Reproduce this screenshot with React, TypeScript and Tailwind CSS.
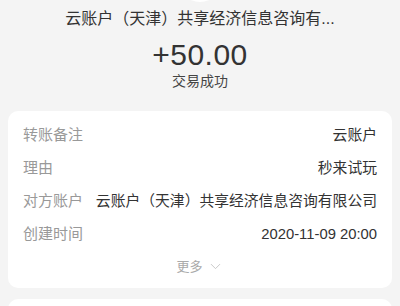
import { ChevronDown } from 'lucide-react'

const rows = [
  { label: '转账备注', value: '云账户' },
  { label: '理由', value: '秒来试玩' },
  { label: '对方账户', value: '云账户（天津）共享经济信息咨询有限公司' },
  { label: '创建时间', value: '2020-11-09 20:00' },
]

export default function App() {
  return (
    <div
      className="w-[400px] h-[306px] overflow-hidden bg-[#f4f4f4] text-[#333]"
      style={{ fontFamily: '"Liberation Sans", "Noto Sans CJK SC", sans-serif' }}
    >
      <div className="flex justify-center">
        <div className="w-[44px] h-[44px] -mt-[42px] rounded-full bg-white" />
      </div>

      {/* header */}
      <div className="flex flex-col items-center">
        <div className="mt-[6px] text-[16px] leading-[22px] text-[#333]">云账户（天津）共享经济信息咨询有...</div>
        <div className="mt-[7px] text-[30px] leading-[36px] tracking-[0.5px] text-[#333]">+50.00</div>
        <div className="-mt-[2px] text-[14px] leading-[20px] text-[#444]">交易成功</div>
      </div>

      {/* detail card */}
      <div className="mx-[8px] mt-[20px] rounded-[10px] bg-white px-[15px] pt-[8px] pb-[6px]">
        {rows.map((row) => (
          <div key={row.label} className="flex items-center justify-between h-[33px] text-[15px]">
            <span className="text-[#999] shrink-0">{row.label}</span>
            <span className="text-[#333] whitespace-nowrap text-[14.8px]">{row.value}</span>
          </div>
        ))}
        <div className="flex items-center justify-center gap-[4px] h-[31px] text-[13px] text-[#aaa]">
          <span>更多</span>
          <ChevronDown className="w-[17px] h-[17px] text-[#c4c4c4]" strokeWidth={1.3} />
        </div>
      </div>

      <div className="mx-[8px] mt-[11px] h-[40px] rounded-[10px] bg-white" />
    </div>
  )
}
